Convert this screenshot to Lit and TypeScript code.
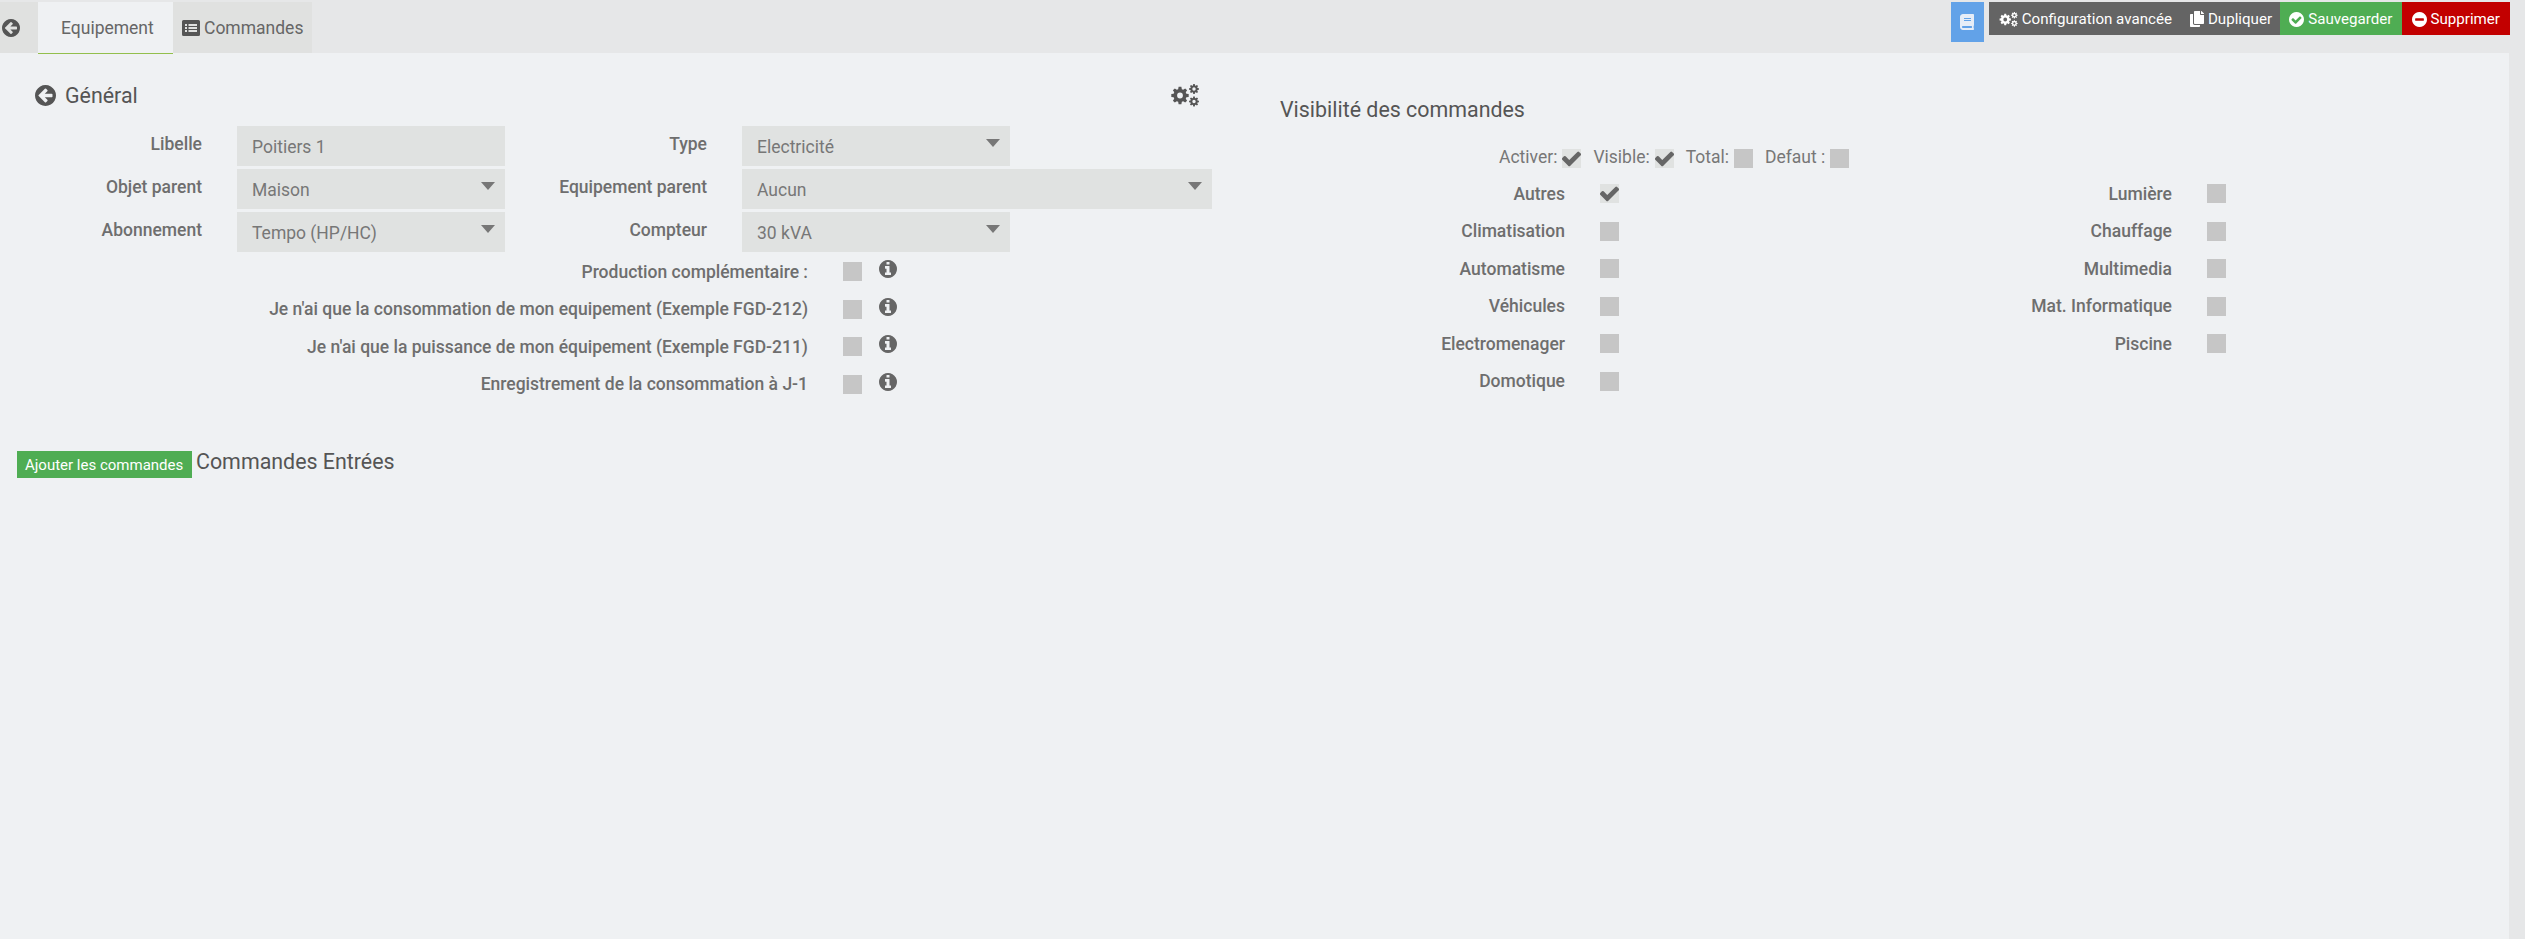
import { LitElement, html, css, svg } from "lit";
import { customElement } from "lit/decorators.js";

const CIRCLE = "q0 209-103 385.5t-279.5 279.5-385.5 103-385.5-103-279.5-279.5-103-385.5 103-385.5 279.5-279.5 385.5-103 385.5 103 279.5 279.5 103 385.5z";
const P = {
  back: "M1408 960v-128q0-26-19-45t-45-19h-502l189-189q19-19 19-45t-19-45l-91-91q-18-18-45-18t-45 18l-362 362-91 91q-18 18-18 45t18 45l91 91 362 362q18 18 45 18t45-18l91-91q18-18 18-45t-18-45l-189-189h502q26 0 45-19t19-45zm256-64" + CIRCLE,
  ok: "M1412 734q0-28-18-46l-91-90q-19-19-45-19t-45 19l-408 407-226-226q-19-19-45-19t-45 19l-91 90q-18 18-18 46 0 27 18 45l362 362q19 19 45 19 27 0 46-19l543-543q18-18 18-45zm252 162" + CIRCLE,
  minus: "M1344 960v-128q0-26-19-45t-45-19h-768q-26 0-45 19t-19 45v128q0 26 19 45t45 19h768q26 0 45-19t19-45zm320-64" + CIRCLE,
  info: "M1152 1376v-160q0-14-9-23t-23-9h-96v-512q0-14-9-23t-23-9h-320q-14 0-23 9t-9 23v160q0 14 9 23t23 9h96v320h-96q-14 0-23 9t-9 23v160q0 14 9 23t23 9h448q14 0 23-9t9-23zm-128-896v-160q0-14-9-23t-23-9h-192q-14 0-23 9t-9 23v160q0 14 9 23t23 9h192q14 0 23-9t9-23zm640 416" + CIRCLE,
  check: "M1671 566q0 40-28 68l-724 724-136 136q-28 28-68 28t-68-28l-136-136-362-362q-28-28-28-68t28-68l136-136q28-28 68-28t68 28l294 295 656-657q28-28 68-28t68 28l136 136q28 28 28 68z",
};
const COPY = "M320 448v40c0 13.255-10.745 24-24 24H24c-13.255 0-24-10.745-24-24V120c0-13.255 10.745-24 24-24h72v296c0 30.879 25.121 56 56 56h168zm0-344V0H152c-13.255 0-24 10.745-24 24v368c0 13.255 10.745 24 24 24h272c13.255 0 24-10.745 24-24V128H344c-13.2 0-24-10.8-24-24zm120.971-31.029L375.029 7.029A24 24 0 0 0 358.059 0H352v96h96v-6.059a24 24 0 0 0-7.029-16.97z";
const BOOK = "M448 360V24c0-13.3-10.7-24-24-24H96C43 0 0 43 0 96v320c0 53 43 96 96 96h328c13.3 0 24-10.7 24-24v-16c0-7.5-3.5-14.3-8.9-18.7-4.2-15.4-4.2-59.3 0-74.7 5.4-4.3 8.9-11.1 8.9-18.6zM128 134c0-3.3 2.7-6 6-6h212c3.3 0 6 2.7 6 6v20c0 3.3-2.7 6-6 6H134c-3.3 0-6-2.7-6-6v-20zm0 64c0-3.3 2.7-6 6-6h212c3.3 0 6 2.7 6 6v20c0 3.3-2.7 6-6 6H134c-3.3 0-6-2.7-6-6v-20zm253.4 250H96c-17.7 0-32-14.3-32-32 0-17.6 14.4-32 32-32h285.4c-1.9 17.1-1.9 46.9 0 64z";

function gear(cx: number, cy: number, ro: number, ri: number, hole: number, teeth: number): string {
  const pts: string[] = [];
  const step = (Math.PI * 2) / teeth;
  for (let i = 0; i < teeth; i++) {
    const a = i * step;
    const pick = [
      [ri, a - step * 0.36],
      [ro, a - step * 0.2],
      [ro, a + step * 0.2],
      [ri, a + step * 0.36],
    ];
    for (const [r, t] of pick) pts.push(`${(cx + r * Math.cos(t)).toFixed(2)} ${(cy + r * Math.sin(t)).toFixed(2)}`);
  }
  return `M${pts.join("L")}zM${cx - hole} ${cy}a${hole} ${hole} 0 1 0 ${hole * 2} 0a${hole} ${hole} 0 1 0 ${-hole * 2} 0z`;
}
const COGS = gear(9, 11.5, 8.8, 6.6, 2.9, 8) + gear(23, 5, 5, 3.7, 1.7, 8) + gear(23, 17.5, 5, 3.7, 1.7, 8);

const fa = (d: string, size: number, cls = "") => html`<svg class="ico ${cls}" width=${size} height=${size} viewBox="128 128 1536 1536" fill="currentColor" fill-rule="evenodd">${svg`<path d=${d}></path>`}</svg>`;
const cogs = (w: number, h: number) => html`<svg class="ico" width=${w} height=${h} viewBox="0 0 28 23" fill="currentColor" fill-rule="evenodd">${svg`<path d=${COGS}></path>`}</svg>`;
const listAlt = html`<svg class="ico" width="18" height="16" viewBox="0 0 18 16" fill="currentColor" fill-rule="evenodd">${svg`<path d="M1.5 0h15A1.5 1.5 0 0 1 18 1.500v13a1.500 1.500 0 0 1-1.500 1.500h-15A1.500 1.500 0 0 1 0 14.500v-13A1.500 1.500 0 0 1 1.500 0zM3 4v2h2V4zm3.500 0v2H15V4zM3 7v2h2V7zm3.500 0v2H15V7zM3 10v2h2v-2zm3.500 0v2H15v-2z"></path>`}</svg>`;

@customElement("app-root")
export class AppRoot extends LitElement {
  static styles = css`
    :host {
      display: block;
      min-height: 939px;
      background: #e6e7e8;
      font-family: Roboto, "Liberation Sans", sans-serif;
      font-size: 17.5px;
      color: #666;
      box-sizing: border-box;
      overflow: hidden;
    }
    .ico { display: block; flex: none; }
    .topbar { height: 53px; display: flex; justify-content: space-between; align-items: flex-start; padding: 2px 15px 0 0; box-sizing: border-box; }
    .tabs { display: flex; height: 51px; }
    .tab { display: flex; align-items: center; background: #e0e1e0; color: #666; box-sizing: border-box; padding-top: 1px; }
    .tab.back { width: 38px; padding-left: 2px; color: #555; }
    .tab.on { width: 135px; padding-left: 23px; background: #eff1f3; height: 52px; border-bottom: 1px solid #93bf4c; position: relative; padding-bottom: 1px; }
    .tab.cmd { width: 139px; padding-left: 9px; gap: 4px; color: #666; }
    .tab.cmd .ico { color: #555; }
    .actions { display: flex; gap: 5px; align-items: flex-start; }
    .btn-doc { width: 33px; height: 40px; background: #62a2e8; display: flex; align-items: center; justify-content: center; color: #e6edf7; }
    .group { display: flex; height: 33px; color: #fff; font-size: 15.12px; }
    .btn { display: flex; align-items: center; gap: 4px; padding: 1px 10px 0; box-sizing: border-box; }
    .dark { background: #646464; padding-right: 8px; }
    .green { background: #4fad53; padding: 1px 9.2px 0; }
    .red { background: #c20000; }
    .panel { background: #eff1f3; margin-right: 16px; min-height: 886px; box-sizing: border-box; }
    .main { display: grid; grid-template-columns: 1280px 1fr; }
    .head { display: flex; align-items: center; height: 30px; margin: 27px 0 16px; padding-left: 35px; width: 1199px; box-sizing: border-box; color: #555; font-size: 21.4px; }
    .head .ico:first-child { margin-right: 9px; }
    .head span { flex: 1; }
    .form { display: grid; grid-template-columns: 237px 268px 237px 268px 202px; grid-auto-rows: 40px; row-gap: 3px; }
    .lbl { display: flex; align-items: center; justify-content: flex-end; padding: 0 35px 4px 0; font-weight: 500; color: #6e6e6e; }
    .field { display: flex; align-items: center; justify-content: space-between; background: #e0e2e1; color: #777; padding: 2px 10px 0 15px; }
    .arrow { width: 0; height: 0; border: 7px solid transparent; border-top: 8px solid #777; border-bottom: 0; margin-bottom: 8px; }
    .wide { grid-column: span 2; }
    .opts { margin-top: 1px; }
    .opt { display: grid; grid-template-columns: 808px 19px 18px; column-gap: 35px; height: 37.5px; align-items: center; }
    .opt .t { text-align: right; font-weight: 500; color: #6e6e6e; }
    .opt .ico { margin: -5px 0 0 -18px; color: #666; }
    .box { width: 19px; height: 19px; background: #c6c6c6; display: flex; align-items: center; justify-content: center; color: #666; flex: none; }
    .box.on { background: #e0e2e1; }
    .box.on .ico { margin-top: 0; }
    .side { padding-top: 42px; }
    .side h3 { margin: 0; font-size: 21.4px; font-weight: 400; line-height: 30px; color: #555; }
    .top-row { display: flex; gap: 12px; padding-left: 219px; margin-top: 24px; height: 19px; color: #777; line-height: 17px; }
    .top-row .item { display: flex; align-items: flex-start; gap: 5px; }
    .cats { display: flex; margin-top: 6.75px; }
    .cat-col { width: 607px; }
    .cat { display: grid; grid-template-columns: 285px 19px; column-gap: 35px; height: 37.5px; align-items: center; }
    .cat .t { text-align: right; font-weight: 500; color: #6e6e6e; }
    .entries { display: flex; align-items: flex-start; gap: 4px; padding-left: 17px; margin-top: 48px; }
    .add { height: 27px; width: 175px; background: #4fad53; color: #fff; font-size: 15px; display: flex; align-items: center; padding: 0 8px; box-sizing: border-box; white-space: nowrap; }
    .entries h3 { margin: -1px 0 0; font-size: 21.4px; font-weight: 400; line-height: 24px; color: #555; }
  `;

  private box(on: boolean) {
    return html`<div class="box ${on ? "on" : ""}">${on ? fa(P.check, 19) : ""}</div>`;
  }

  render() {
    const opts = [
      "Production complémentaire :",
      "Je n'ai que la consommation de mon equipement (Exemple FGD-212)",
      "Je n'ai que la puissance de mon équipement (Exemple FGD-211)",
      "Enregistrement de la consommation à J-1",
    ];
    const colA: [string, boolean][] = [["Autres", true], ["Climatisation", false], ["Automatisme", false], ["Véhicules", false], ["Electromenager", false], ["Domotique", false]];
    const colB: [string, boolean][] = [["Lumière", false], ["Chauffage", false], ["Multimedia", false], ["Mat. Informatique", false], ["Piscine", false]];
    const cat = ([t, on]: [string, boolean]) => html`<div class="cat"><div class="t">${t}</div>${this.box(on)}</div>`;
    return html`
      <div class="topbar">
        <div class="tabs">
          <div class="tab back">${fa(P.back, 18)}</div>
          <div class="tab on">Equipement</div>
          <div class="tab cmd">${listAlt}Commandes</div>
        </div>
        <div class="actions">
          <div class="btn-doc"><svg class="ico" width="14" height="16" viewBox="0 0 448 512" fill="currentColor">${svg`<path d=${BOOK}></path>`}</svg></div>
          <div class="group">
            <div class="btn dark">${cogs(19, 15)}Configuration avancée</div>
            <div class="btn dark"><svg class="ico" width="14" height="16" viewBox="0 0 448 512" fill="currentColor">${svg`<path d=${COPY}></path>`}</svg>Dupliquer</div>
            <div class="btn green">${fa(P.ok, 15)}Sauvegarder</div>
            <div class="btn red">${fa(P.minus, 15)}Supprimer</div>
          </div>
        </div>
      </div>
      <div class="panel">
        <div class="main">
          <div>
            <div class="head">${fa(P.back, 21)}<span>Général</span>${cogs(28, 23)}</div>
            <div class="form">
              <div class="lbl">Libelle</div>
              <div class="field">Poitiers 1</div>
              <div class="lbl">Type</div>
              <div class="field">Electricité<i class="arrow"></i></div>
              <div></div>
              <div class="lbl">Objet parent</div>
              <div class="field">Maison<i class="arrow"></i></div>
              <div class="lbl">Equipement parent</div>
              <div class="field wide">Aucun<i class="arrow"></i></div>
              <div class="lbl">Abonnement</div>
              <div class="field">Tempo (HP/HC)<i class="arrow"></i></div>
              <div class="lbl">Compteur</div>
              <div class="field">30 kVA<i class="arrow"></i></div>
            </div>
            <div class="opts">
              ${opts.map((t) => html`<div class="opt"><div class="t">${t}</div>${this.box(false)}${fa(P.info, 18)}</div>`)}
            </div>
          </div>
          <div class="side">
            <h3>Visibilité des commandes</h3>
            <div class="top-row">
              <div class="item">Activer:${this.box(true)}</div>
              <div class="item">Visible:${this.box(true)}</div>
              <div class="item">Total:${this.box(false)}</div>
              <div class="item">Defaut :${this.box(false)}</div>
            </div>
            <div class="cats">
              <div class="cat-col">${colA.map(cat)}</div>
              <div class="cat-col">${colB.map(cat)}</div>
            </div>
          </div>
        </div>
        <div class="entries">
          <div class="add">Ajouter les commandes</div>
          <h3>Commandes Entrées</h3>
        </div>
      </div>
    `;
  }
}
